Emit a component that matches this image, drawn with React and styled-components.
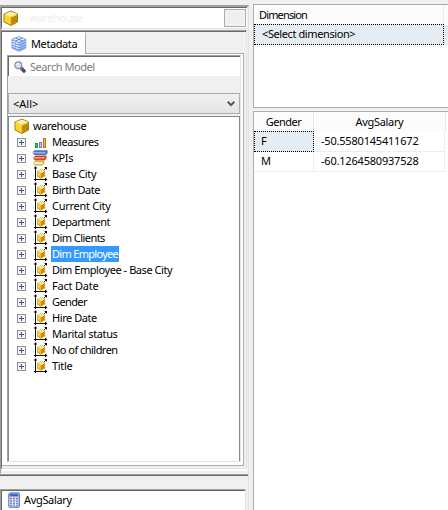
import React from "react";
import styled, { createGlobalStyle } from "styled-components";

const Global = createGlobalStyle`
  * { box-sizing: border-box; }
  body { margin: 0; background: #f0f0f0; overflow: hidden; }
`;

const Window = styled.div`
  width: 448px;
  height: 510px;
  display: flex;
  gap: 4px;
  overflow: hidden;
  background: #f0f0f0;
  color: #000;
  font: 11px/16px "Noto Sans", "Open Sans", sans-serif;
  white-space: nowrap;
`;
const Sidebar = styled.div`
  width: 249px;
  flex: none;
  display: flex;
  flex-direction: column;
  padding-top: 5px;
`;
const Browser = styled.div`
  height: 469px;
  flex: none;
  border: solid #a0a0a0;
  border-width: 2px 0 0 1px;
  border-right: 1px solid #e3e3e3;
  border-bottom: 1px solid #f0f0f0;
  display: flex;
  flex-direction: column;
`;
const TitleBar = styled.div`
  height: 22px;
  margin-right: 1px;
  flex: none;
  display: flex;
  align-items: center;
  justify-content: space-between;
  padding: 0 1px 1px 1px;
  background: #fff;
  border-top: 1px solid #696969;
  border-left: 1px solid #696969;
  border-bottom: 1px solid #e3e3e3;
`;
const TitleText = styled.div`
  display: flex;
  align-items: center;
  gap: 10px;
  color: #eeeeee;
`;
const TitleButton = styled.div`
  width: 22px;
  height: 18px;
  border: 1px solid #adadad;
  background: #efefef;
  box-shadow: inset 0 0 0 2px #f3f3f3;
`;
const Pane = styled.div`
  flex: 1;
  margin: 1px 1px 4px 0;
  border-top: 1px solid #a0a0a0;
  border-left: 1px solid #696969;
  border-right: 1px solid #e3e3e3;
  border-bottom: 1px solid #e3e3e3;
  box-shadow: inset 0 1px #696969, 0 2px #fff;
  padding: 1px 2px 2px 0;
  display: flex;
  flex-direction: column;
`;
const TabStrip = styled.div`
  display: flex;
  height: 22px;
  flex: none;
`;
const Tab = styled.div`
  width: 84px;
  padding-left: 9px;
  display: flex;
  align-items: center;
  gap: 4px;
  background: #fff;
  border-right: 1px solid #acacac;
  border-top: 1px solid #fff;
`;
const TabRest = styled.div`
  flex: 1;
  border-bottom: 1px solid #acacac;
`;
const TabPage = styled.div`
  flex: 1;
  background: #fff;
  border-right: 1px solid #acacac;
  border-bottom: 1px solid #acacac;
  padding: 1px 2px 3px 5px;
  display: flex;
  flex-direction: column;
`;
const Field = styled.div`
  flex: 1;
  display: flex;
  flex-direction: column;
  border-top: 1px solid #a0a0a0;
  border-left: 1px solid #a0a0a0;
  border-right: 1px solid #e3e3e3;
  border-bottom: 1px solid #e3e3e3;
  background: #f0f0f0;
`;
const SearchBox = styled.div`
  height: 20px;
  flex: none;
  display: flex;
  align-items: center;
  gap: 4px;
  padding-left: 5px;
  border-top: 1px solid #696969;
  border-left: 1px solid #696969;
  background: #fff;
  color: #7c7c7c;
`;
const Select = styled.div`
  height: 21px;
  flex: none;
  margin-top: 17px;
  padding: 0 4px;
  display: flex;
  align-items: center;
  justify-content: space-between;
  border: 1px solid #acacac;
  background: linear-gradient(#f0f0f0, #e5e5e5);
`;
const Tree = styled.div`
  flex: 1;
  margin-top: 2px;
  border: 1px solid #828790;
  border-bottom: 0;
  background: #fff;
  padding: 1px 0 0 5px;
`;
const TreeRow = styled.div`
  height: 16px;
  display: flex;
  align-items: center;
  padding-left: ${(p) => (p.$root ? 0 : 3)}px;
`;
const Expander = styled.span`
  width: 9px;
  height: 9px;
  margin-right: 6px;
  display: grid;
`;
const IconSlot = styled.span`
  width: ${(p) => p.$w || 17}px;
  height: 16px;
  display: grid;
`;
const Text = styled.span`
  letter-spacing: ${(p) => p.$track || 0}px;
`;
const NodeLabel = styled.span`
  height: 16px;
  line-height: 16px;
  margin-left: ${(p) => (p.$root ? 1 : 2)}px;
  padding: 0 1px;
  letter-spacing: ${(p) => p.$track || 0}px;
  color: ${(p) => (p.$selected ? "#fff" : "#000")};
  background: ${(p) => (p.$selected ? "#3399ff" : "transparent")};
`;
const LowerPane = styled.div`
  flex: 1;
  border-top: 1px solid #a0a0a0;
  border-right: 1px solid #e3e3e3;
  box-shadow: inset 0 1px #696969;
  padding: 14px 2px 0 0;
`;
const MeasureBox = styled.div`
  height: 40px;
  border-top: 1px solid #a0a0a0;
  border-left: 1px solid #a0a0a0;
  border-right: 1px solid #e3e3e3;
`;
const MeasureRow = styled.div`
  height: 39px;
  border-top: 1px solid #696969;
  border-left: 1px solid #696969;
  background: #fff;
  padding: 1px 0 0 5px;
  display: flex;
  align-items: flex-start;
  gap: 2px;
`;
const Content = styled.div`
  flex: 1;
  display: flex;
  flex-direction: column;
  padding-top: 4px;
  gap: 3px;
`;
const GridPanel = styled.div`
  height: ${(p) => (p.$h ? p.$h + "px" : "auto")};
  flex: ${(p) => (p.$h ? "none" : 1)};
  border: solid #abadb3;
  border-width: 1px 0 ${(p) => (p.$h ? 1 : 0)}px 1px;
  background: #fff;
`;
const HeaderRow = styled.div`
  height: 20px;
  display: flex;
  background: #fcfcfd;
`;
const HeaderCell = styled.div`
  width: ${(p) => p.$w}px;
  padding: ${(p) => (p.$center ? "2px 0 0" : "2px 0 0 5px")};
  text-align: ${(p) => (p.$center ? "center" : "left")};
  border-right: 1px solid #e0ebf9;
`;
const BodyRow = styled.div`
  height: 20px;
  display: flex;
`;
const Cell = styled.div`
  width: ${(p) => p.$w}px;
  padding: 1px 0 0 7px;
  border-right: 1px solid #eeeeee;
  border-bottom: 1px solid #eeeeee;
`;
const FocusCell = styled.div`
  width: ${(p) => p.$w}px;
  height: 21px;
  margin-top: -1px;
  padding: 1px 0 0 ${(p) => p.$pad}px;
  background: #e6edf2;
  border: 1px dotted #000;
`;
const RowRemainder = styled.div`
  flex: 1;
  background: #e9edf0;
`;

const CubeIcon = () => (
  <svg width="16" height="16" viewBox="0 0 16 16">
    <path d="M8 1 14.5 4v8L8 15.4 1 12V4z" fill="#dba510" stroke="#a37713" />
    <path d="M1.6 4 8 1.5 14 4.1 8 6.6z" fill="#fff3a8" />
    <path d="M1.5 4.7 7.8 7.2V14.7L1.5 11.6z" fill="#ffd42a" />
    <path d="M8.3 7.1 14 4.8v7L8.3 14.6z" fill="#bd890b" />
    <path d="M1.7 4.5 8 7l6-2.5" fill="none" stroke="#fff6b8" strokeWidth=".7" />
  </svg>
);
const LatticeIcon = () => (
  <svg width="16" height="16" viewBox="0 0 16 16">
    <path d="M8 .6 14.8 3.4v8.8L8 15.4 1 12.2V3.4z" fill="#e8f3ff" stroke="#7897df" strokeWidth=".9" />
    <path d="M8 6.5v8.6l6.5-3V3.8z" fill="#aecbf7" />
    <path d="M1 3.7 8 6.6l6.8-2.9M1 6.2l7 3 6.8-3M1 8.8l7 3 6.8-3M1 11.1l7 3 6.8-3M4.5 2l7 2.9M11.4 2 4.5 4.9" fill="none" stroke="#577ed5" strokeWidth=".9" />
    <path d="M4.5 5.4v8M8 6.8v8M11.4 5.4v8" stroke="#7d9fe2" strokeWidth=".6" />
  </svg>
);
const SearchIcon = () => (
  <svg width="12" height="12" viewBox="0 0 12 12">
    <path d="m7 7 3 3" stroke="#46536e" strokeWidth="3.6" strokeLinecap="round" />
    <path d="m6 7 2 1.5" stroke="#b96f31" strokeWidth="1.8" />
    <circle cx="4.3" cy="4.2" r="3.4" fill="#d3e4f7" stroke="#8a8d94" strokeWidth="1.3" />
    <path d="M2.3 4c0-1.2 1-1.8 2-1.8" fill="none" stroke="#fff" />
  </svg>
);
const ChevronIcon = () => (
  <svg width="8" height="6" viewBox="0 0 8 6">
    <path d="M.7.8 4 4.1 7.3.8" fill="none" stroke="#555" strokeWidth="2" />
  </svg>
);
const PlusIcon = () => (
  <svg width="9" height="9" viewBox="0 0 9 9" shapeRendering="crispEdges">
    <path d="M.5.5h8v8h-8z" fill="#f4f4f4" stroke="#919191" />
    <path d="M2 4.5h5M4.5 2v5" stroke="#3c5599" />
  </svg>
);
const BarsIcon = () => (
  <svg width="17" height="16" viewBox="0 0 17 16" shapeRendering="crispEdges">
    <path d="M3 9h3v5H3z" fill="#16983f" /><path d="M4 10h1v3H4z" fill="#4fc052" />
    <path d="M7 8h3v6H7z" fill="#7577b8" /><path d="M8 9h1v4H8z" fill="#c6cafa" />
    <path d="M11 4h3v10h-3z" fill="#c96d18" /><path d="M12 5h1v8h-1z" fill="#ffb63e" />
  </svg>
);
const KpiIcon = () => (
  <svg width="17" height="16" viewBox="0 0 17 16">
    <path d="M.8 2 2.6.3h13v3.3l-2 1.5H2.3L.8 3.6z" fill="#4d77bd" />
    <path d="M1 2h12.5v1.5H1z" fill="#91b7ea" />
    <path d="m1.5 7 2-1.6h11v3.3l-2 1.7H3L1.5 8.8z" fill="#cf422f" />
    <path d="M2 7h10.7v1.6H2z" fill="#f49580" />
    <path d="m1.5 12 1.8-1.3h9v3L10.7 15.5H2.6L1.5 14z" fill="#ccae52" />
    <path d="M2 12.1h8.6v2.2H2.5z" fill="#fff3a6" />
  </svg>
);
const DimensionIcon = () => (
  <svg width="17" height="16" viewBox="0 0 17 16">
    <path d="M3.5 1v14M2 13.5h12" fill="none" stroke="#111" shapeRendering="crispEdges" />
    <path d="m12 4 2.5-2.5" stroke="#111" />
    <path d="M1.7 2.6 3.5.3l1.8 2.3zM13 11.5l2.4 2-2.4 2zM12.2 1H15v3z" fill="#000" />
    <path d="m9.2 3.8 3.5 1.5v5l-3.7 2-3.5-1.8v-5z" fill="#efb91e" stroke="#d29924" strokeWidth=".8" />
    <path d="m5.8 5.5 3.4-1.4 3.2 1.3L9.1 7z" fill="#fff3a3" />
    <path d="m9.2 7.2 3.2-1.6v4.5l-3.2 1.8z" fill="#cb8615" />
    <path d="M6.8 7v3" stroke="#ffe578" />
  </svg>
);
const CalculatorIcon = () => (
  <svg width="15" height="16" viewBox="0 0 15 16">
    <path d="M3 .8h8.5l1 .8v13l-1 .8H2.5l-.8-.8V1.8z" fill="#89a9e3" stroke="#6f82b5" />
    <path d="M3 2h8v2H3z" fill="#316bd0" />
    <path d="M2.5 5h9v9.5h-9z" fill="#d9e5fa" />
    <path d="M3 6.5h2m1 0h2m1 0h2" stroke="#d05a68" strokeWidth="1.5" />
    <path d="M3 9h2m1 0h2m1 0h2M3 11.5h2m1 0h2m1 0h2M3 13.7h2m1 0h2m1 0h2" stroke="#718dc8" strokeWidth="1.3" />
  </svg>
);

const nodes = [
  { name: "Measures", track: -0.45, Icon: BarsIcon },
  { name: "KPIs", track: -0.35, Icon: KpiIcon },
  { name: "Base City", track: -0.3 },
  { name: "Birth Date", track: -0.45 },
  { name: "Current City", track: -0.27 },
  { name: "Department", track: -0.5 },
  { name: "Dim Clients", track: -0.55 },
  { name: "Dim Employee", track: -0.7 },
  { name: "Dim Employee - Base City", track: -0.44 },
  { name: "Fact Date", track: -0.2 },
  { name: "Gender", track: -0.6 },
  { name: "Hire Date", track: -0.43 },
  { name: "Marital status", track: -0.38 },
  { name: "No of children", track: -0.53 },
  { name: "Title", track: -0.3 },
];

function MetadataTree() {
  return (
    <Tree>
      <TreeRow $root>
        <IconSlot><CubeIcon /></IconSlot>
        <NodeLabel $root $track={-0.43}>warehouse</NodeLabel>
      </TreeRow>
      {nodes.map(({ name, track, Icon = DimensionIcon }) => (
        <TreeRow key={name}>
          <Expander><PlusIcon /></Expander>
          <IconSlot><Icon /></IconSlot>
          <NodeLabel $selected={name === "Dim Employee"} $track={track}>{name}</NodeLabel>
        </TreeRow>
      ))}
    </Tree>
  );
}

export default function App() {
  return (
    <>
      <Global />
      <Window>
        <Sidebar>
          <Browser>
            <TitleBar>
              <TitleText><CubeIcon /><Text $track={-0.4}>warehouse</Text></TitleText>
              <TitleButton />
            </TitleBar>
            <Pane>
              <TabStrip>
                <Tab><LatticeIcon /><Text $track={-0.4}>Metadata</Text></Tab>
                <TabRest />
              </TabStrip>
              <TabPage>
                <Field>
                  <SearchBox><SearchIcon /><Text $track={-0.45}>Search Model</Text></SearchBox>
                  <Select><Text>&lt;All&gt;</Text><ChevronIcon /></Select>
                  <MetadataTree />
                </Field>
              </TabPage>
            </Pane>
          </Browser>
          <LowerPane>
            <MeasureBox>
              <MeasureRow><CalculatorIcon /><Text $track={-0.33}>AvgSalary</Text></MeasureRow>
            </MeasureBox>
          </LowerPane>
        </Sidebar>
        <Content>
          <GridPanel $h={104}>
            <HeaderRow>
              <HeaderCell $w={190}><Text $track={-0.85}>Dimension</Text></HeaderCell>
            </HeaderRow>
            <BodyRow>
              <FocusCell $w={190} $pad={7}><Text $track={-0.4}>&lt;Select dimension&gt;</Text></FocusCell>
              <RowRemainder />
            </BodyRow>
          </GridPanel>
          <GridPanel>
            <HeaderRow>
              <HeaderCell $w={60} $center><Text $track={-0.5}>Gender</Text></HeaderCell>
              <HeaderCell $w={132} $center><Text $track={-0.33}>AvgSalary</Text></HeaderCell>
            </HeaderRow>
            <BodyRow>
              <FocusCell $w={60} $pad={6}>F</FocusCell>
              <Cell $w={131}><Text $track={-0.2}>-50.5580145411672</Text></Cell>
            </BodyRow>
            <BodyRow>
              <Cell $w={60}>M</Cell>
              <Cell $w={131}><Text $track={-0.2}>-60.1264580937528</Text></Cell>
            </BodyRow>
          </GridPanel>
        </Content>
      </Window>
    </>
  );
}
